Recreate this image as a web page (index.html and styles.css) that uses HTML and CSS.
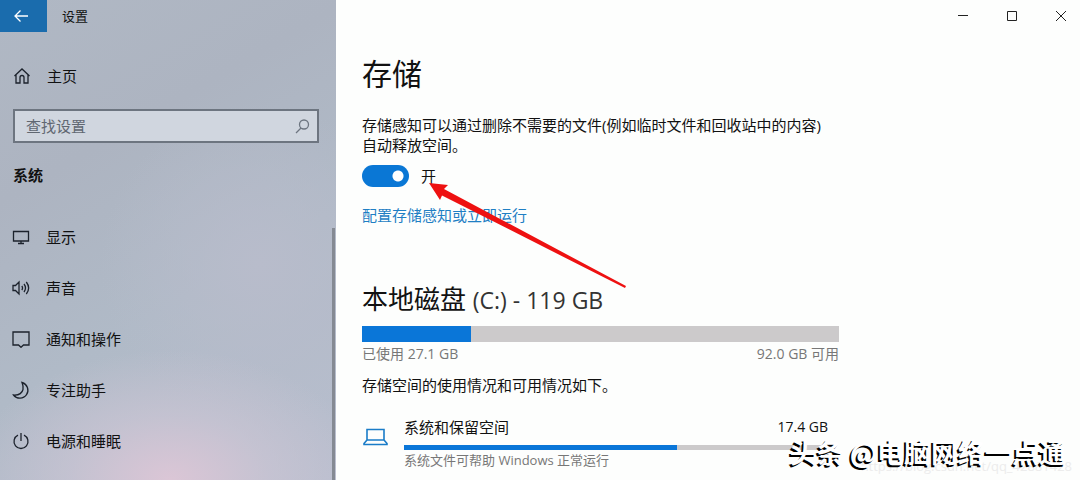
FILE: index.html
```
<!DOCTYPE html>
<html lang="zh-CN">
  <head>
    <meta charset="utf-8">
    <meta name="viewport" content="width=device-width">
    <title>设置</title>
    <link rel="stylesheet" href="styles.css">
  </head>
  <body>
    <div class="window">
      <aside class="sidebar">
        <div class="titlebar">
          <button class="back" type="button" aria-label="返回">
            <svg width="16" height="14" viewBox="0 0 16 14"><path d="M15 7H2M7.500 1.500L2 7l5.500 5.500" /></svg>
          </button>
          <span class="app-name">设置</span>
        </div>

        <a class="nav-item home" href="#home">
          <svg class="icon" viewBox="0 0 18 18"><path d="M1.500 9L9 2l7.500 7M3 7.800V16h4v-5.500a2 2 0 0 1 4 0V16h4V7.800" /></svg>
          <span>主页</span>
        </a>

        <div class="search">
          <input type="text" placeholder="查找设置" aria-label="查找设置">
          <svg width="15" height="15" viewBox="0 0 15 15"><circle cx="9" cy="5.500" r="4.500" /><path d="M6 9L1 14" /></svg>
        </div>

        <h2>系统</h2>

        <nav>
          <a class="nav-item" href="#display">
            <svg class="icon" viewBox="0 0 18 18"><path d="M1.500 3.500h15v9.500h-15zM9 13v2.500M6 15.500h6" /></svg>
            <span>显示</span>
          </a>
          <a class="nav-item" href="#sound">
            <svg class="icon" viewBox="0 0 18 18"><path d="M1 6.500v5h2.500L7 15V3L3.500 6.500zM9.800 7q1.500 2 0 4M12 5q3 4 0 8M14.300 3q4.700 6 0 12" /></svg>
            <span>声音</span>
          </a>
          <a class="nav-item" href="#notifications">
            <svg class="icon" viewBox="0 0 18 18"><path d="M1 2h16v13h-5.500L9 17.300 6.500 15H1z" /></svg>
            <span>通知和操作</span>
          </a>
          <a class="nav-item" href="#focus">
            <svg class="icon" viewBox="0 0 18 18"><path d="M10 1.500A8 8 0 1 1 1.500 14Q9.500 14.500 11 8.500 11.500 5 10 1.500z" /></svg>
            <span>专注助手</span>
          </a>
          <a class="nav-item" href="#power">
            <svg class="icon" viewBox="0 0 18 18"><path d="M9 1v8M6 3.200a7 7 0 1 0 6 0" /></svg>
            <span>电源和睡眠</span>
          </a>
        </nav>
        <div class="scrollbar"></div>
      </aside>

      <main>
        <div class="controls">
          <button type="button" aria-label="最小化"><svg width="12" height="12" viewBox="0 0 12 12"><path d="M1 5.500h10" /></svg></button>
          <button type="button" aria-label="最大化"><svg width="12" height="12" viewBox="0 0 12 12"><path d="M1.500 1.500h9v9h-9z" /></svg></button>
          <button type="button" aria-label="关闭"><svg width="12" height="12" viewBox="0 0 12 12"><path d="M1 1l10 10M11 1L1 11" /></svg></button>
        </div>

        <div class="content">
          <h1>存储</h1>
          <p class="intro">存储感知可以通过删除不需要的文件(例如临时文件和回收站中的内容)自动释放空间。</p>
          <label class="toggle">
            <input type="checkbox" role="switch" checked>
            <span>开</span>
          </label>
          <a class="link" href="#configure">配置存储感知或立即运行</a>

          <h3>本地磁盘 <span class="latin">(C:) - 119 GB</span></h3>
          <div class="bar"><div class="fill" style="width: 22.800%"></div></div>
          <div class="usage"><span>已使用 27.1 GB</span><span>92.0 GB 可用</span></div>
          <p class="note">存储空间的使用情况和可用情况如下。</p>

          <div class="category">
            <svg width="26" height="20" viewBox="0 0 26 20"><path d="M5 2.500h17v10.500H5zM5 13l-3 3.500v1h23v-1L22 13" /></svg>
            <div class="detail">
              <div class="row"><span>系统和保留空间</span><span class="size">17.4 GB</span></div>
              <div class="bar thin"><div class="fill" style="width: 64.300%"></div></div>
              <div class="hint">系统文件可帮助 Windows 正常运行</div>
            </div>
          </div>
        </div>
      </main>

      <svg class="arrow" width="200" height="110" viewBox="0 0 200 110"><path d="M1 2L20 4 16 8 198 105 197 107 14 14.500 12 19z" /></svg>
      <div class="source">https://blog.csdn.net/qq_42881428</div>
      <div class="watermark">头条 @电脑网络一点通</div>
    </div>
  </body>
</html>
```

FILE: styles.css
```
* {
  box-sizing: border-box;
}
body {
  margin: 0;
  overflow: hidden;
  font-family: "Open Sans", "Noto Sans CJK SC", sans-serif;
  font-size: 15px;
  line-height: 20px;
  color: #111;
}
h1, h2, h3, p {
  margin: 0;
  font-weight: normal;
}
button {
  border: 0;
  padding: 0;
  background: none;
}
svg {
  display: block;
  flex: none;
  fill: none;
  stroke: #1c222c;
  stroke-width: 1.3;
}
.window {
  position: relative;
  display: flex;
  min-height: 100vh;
  background: #fdfefd;
}

/* Sidebar */
.sidebar {
  position: relative;
  flex: none;
  width: 336px;
  background:
    radial-gradient(ellipse 200px 130px at 170px 100%, #dbc6d6, rgba(206, 198, 213, 0.6) 50%, transparent),
    radial-gradient(ellipse 160px 160px at 260px 55%, #b8bccb, transparent),
    linear-gradient(150deg, #b0b8c4, #adb4c1 30%, #b0bac7 60%, #b8bece);
}
.titlebar {
  display: flex;
  align-items: center;
  gap: 15px;
  height: 32px;
  font-size: 13px;
}
.back {
  display: flex;
  align-items: center;
  justify-content: center;
  width: 47px;
  height: 32px;
  padding-right: 5px;
  background: #1a6cad;
}
.back svg {
  stroke: #fff;
}
.nav-item {
  display: flex;
  align-items: center;
  gap: 16px;
  height: 51px;
  padding-left: 12px;
  color: #111;
  text-decoration: none;
}
.icon {
  width: 18px;
  height: 18px;
}
.home {
  margin-top: 18px;
  padding-left: 13px;
}
.search {
  display: flex;
  align-items: center;
  height: 34px;
  margin: 8px 17px 0 13px;
  padding-right: 7px;
  border: 2px solid #6d7580;
  background: #d0d6df;
}
.search input {
  flex: 1;
  min-width: 0;
  padding: 0 0 0 11px;
  border: 0;
  outline: 0;
  background: none;
  font: inherit;
}
.search input::placeholder {
  color: #606771;
  opacity: 1;
}
.search svg {
  stroke: #6d7580;
}
h2 {
  margin: 22px 0 26px 13px;
  font-size: 15px;
  font-weight: bold;
}
.scrollbar {
  position: absolute;
  top: 228px;
  right: 1px;
  bottom: 0;
  width: 3px;
  background: #858a93;
}

/* Content */
main {
  flex: 1;
  min-width: 0;
}
.controls {
  display: flex;
  justify-content: flex-end;
  height: 32px;
}
.controls button {
  display: flex;
  align-items: center;
  justify-content: center;
  width: 49px;
}
.controls button:last-child {
  width: 44px;
  padding-left: 6px;
}
.controls svg {
  stroke: #222;
  stroke-width: 1;
}
.content {
  max-width: 503px;
  padding: 22px 0 0 26px;
}
h1 {
  font-size: 30px;
  line-height: 40px;
}
.intro {
  max-width: 464px;
  margin-top: 21px;
}
.toggle {
  display: flex;
  align-items: center;
  gap: 12px;
  margin: 10px 0 18px;
}
.toggle input {
  appearance: none;
  width: 47px;
  height: 22px;
  margin: 0;
  border-radius: 11px;
  background: radial-gradient(circle at 36px 11px, #fff 5px, #0a77d5 6px);
}
.link {
  color: #1f7fc4;
  text-decoration: none;
}
h3 {
  margin: 56px 0 8px;
  font-size: 26px;
  line-height: 36px;
}
.latin {
  font-size: 23px;
  color: #333;
}
.bar {
  height: 16px;
  background: #cccacb;
}
.fill {
  height: 100%;
  background: #0a76d8;
}
.usage {
  display: flex;
  justify-content: space-between;
  margin-top: 2px;
  font-size: 14px;
  color: #777;
}
.note {
  margin-top: 11px;
}
.category {
  display: flex;
  gap: 16px;
  margin: 22px 11px 0 0;
}
.category svg {
  margin-top: 10px;
  stroke: #1a7cc8;
  stroke-width: 1.6;
}
.detail {
  flex: 1;
}
.row {
  display: flex;
  justify-content: space-between;
}
.size {
  font-size: 14px;
}
.thin {
  height: 5px;
  margin-top: 8px;
}
.hint {
  font-size: 13px;
  color: #777;
}

/* Overlays */
.arrow {
  position: absolute;
  top: 181px;
  left: 428px;
  fill: #ee1111;
  stroke: none;
}
.source {
  position: absolute;
  right: 8px;
  bottom: 4px;
  font-size: 13px;
  color: #ececec;
}
.watermark {
  position: absolute;
  right: 14px;
  bottom: 10px;
  font-family: "Noto Sans CJK SC", sans-serif;
  font-size: 27px;
  font-weight: bold;
  line-height: 36px;
  color: #fff;
  text-shadow: -2px 2px #000;
}
```
